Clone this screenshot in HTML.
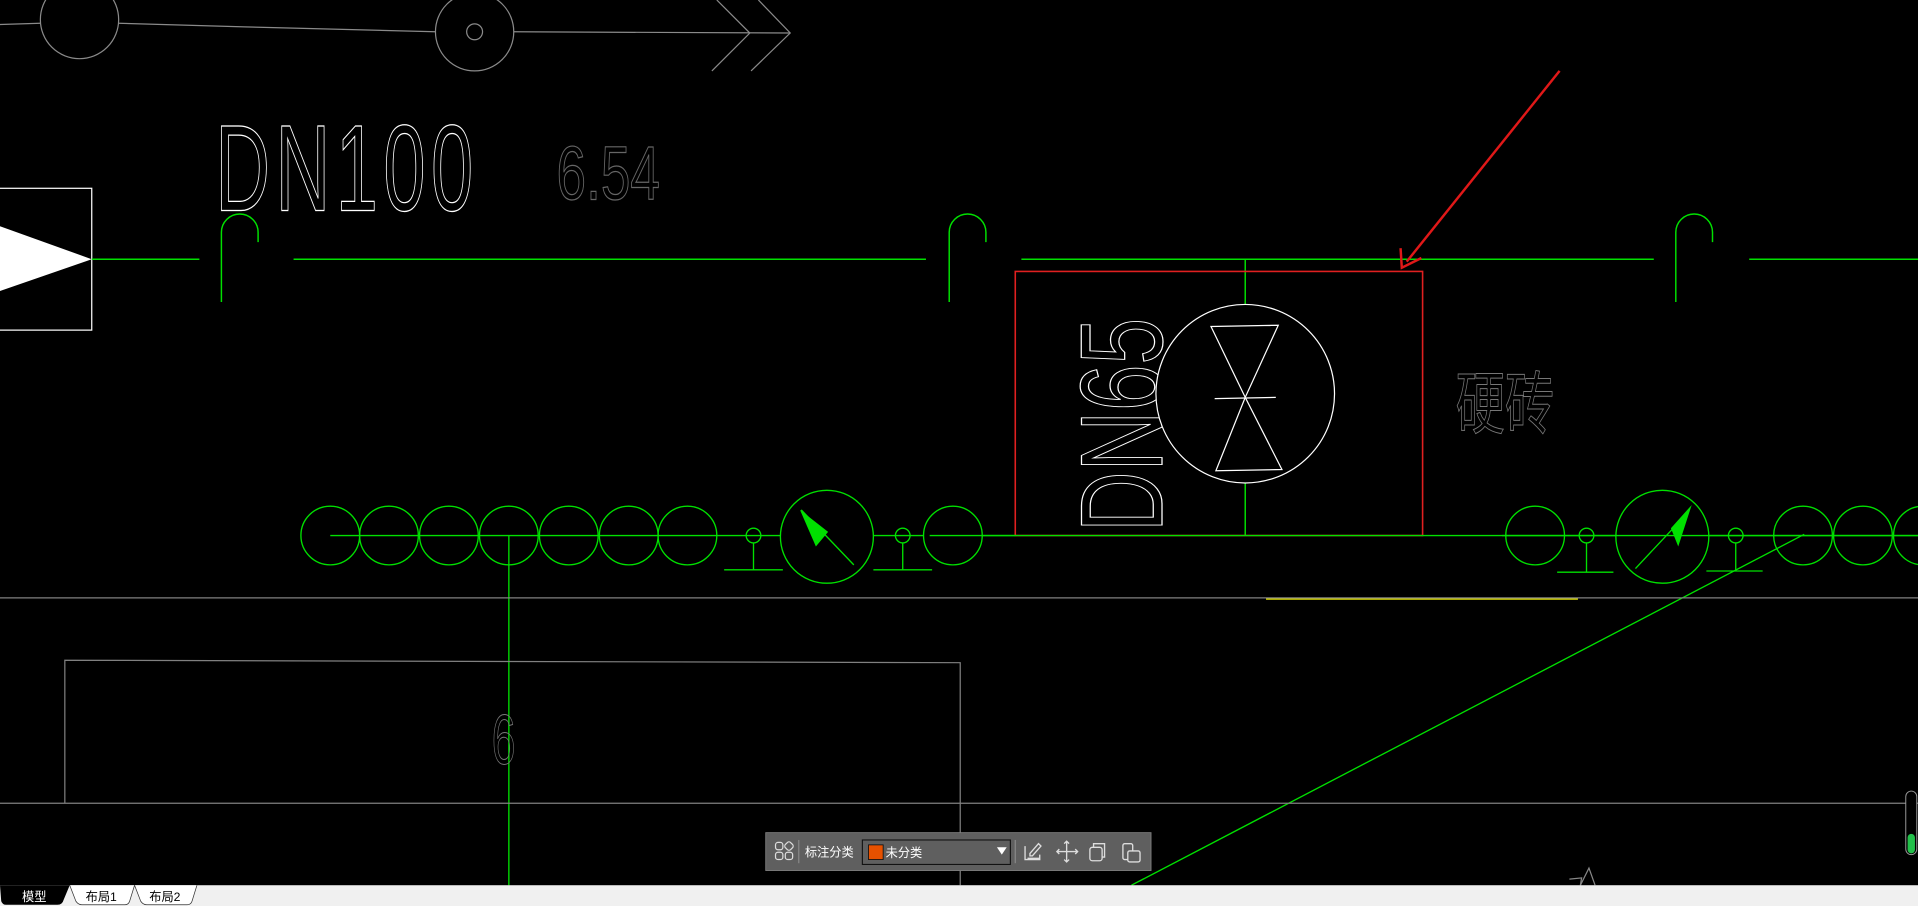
<!DOCTYPE html>
<html><head><meta charset="utf-8"><style>
html,body{margin:0;padding:0;background:#000;width:1918px;height:906px;overflow:hidden}
svg{display:block}
</style></head><body>
<svg width="1918" height="906" viewBox="0 0 1568 741" preserveAspectRatio="none" xmlns="http://www.w3.org/2000/svg" font-family="'Liberation Sans','Noto Sans CJK SC',sans-serif">
<rect width="1568" height="741" fill="#000"/>
<g stroke="#8a8a8a" fill="none" stroke-width="1">
<circle cx="65" cy="16" r="32"/>
<circle cx="388" cy="26" r="32"/><circle cx="388" cy="26" r="6.5"/>
<polyline points="0,20 33,19"/><polyline points="97,19 200,22 356,26"/><line x1="420" y1="26" x2="646" y2="27"/>
<polyline points="586,0 613,27 582,58"/><polyline points="620,0 646,27 614,58"/>
</g>
<text x="176" y="172" font-size="100" fill="none" stroke="#fff" stroke-width="1" transform="translate(176 172) scale(0.62 1) translate(-176 -172)" textLength="340">DN100</text>
<text x="455" y="163" font-size="62" fill="none" stroke="#666" stroke-width="1" transform="translate(455 163) scale(0.7 1) translate(-455 -163)">6.54</text>
<rect x="-2" y="154" width="77" height="116" fill="#000" stroke="#fff"/>
<polygon points="0,185 75,212 0,238" fill="#fff"/>
<g stroke="#00e000" fill="none" stroke-width="1.2">
<line x1="75" y1="212" x2="163" y2="212"/>
<line x1="240" y1="212" x2="757" y2="212"/>
<line x1="835" y1="212" x2="1352" y2="212"/>
<line x1="1430" y1="212" x2="1568" y2="212"/>
<path d="M181,247 V190 A15,15 0 0 1 211,190 V198"/>
<path d="M776,247 V190 A15,15 0 0 1 806,190 V198"/>
<path d="M1370,247 V190 A15,15 0 0 1 1400,190 V198"/>
<line x1="1018" y1="212" x2="1018" y2="438"/>
</g>
<rect x="830" y="222" width="333" height="216" fill="none" stroke="#e02020" stroke-width="1.3"/>
<text font-size="96" fill="none" stroke="#fff" stroke-width="1" transform="translate(950 435) rotate(-90)" textLength="175" lengthAdjust="spacingAndGlyphs">DN65</text>
<g stroke="#fff" fill="none" stroke-width="1">
<circle cx="1018" cy="322" r="73" fill="#000"/>
<polygon points="990,267 1045,266 1018,325"/>
<polygon points="994,385 1048,384 1018,325"/>
<line x1="993" y1="326" x2="1043" y2="325"/>
</g>
<text x="1190" y="350" font-size="56" fill="none" stroke="#777" stroke-width="0.8" transform="translate(1190 350) scale(0.72 1) translate(-1190 -350)">硬砖</text>
<g stroke="#00e000" fill="none" stroke-width="1.1">
<line x1="270" y1="438" x2="1568" y2="438"/>
<circle cx="270" cy="438" r="24"/><circle cx="318" cy="438" r="24"/><circle cx="367" cy="438" r="24"/><circle cx="416" cy="438" r="24"/><circle cx="465" cy="438" r="24"/><circle cx="514" cy="438" r="24"/><circle cx="562" cy="438" r="24"/>
<circle cx="616" cy="438" r="6"/><line x1="616" y1="444" x2="616" y2="466"/><line x1="592" y1="466" x2="640" y2="466"/>
<circle cx="676" cy="439" r="38" fill="#000"/>
<line x1="655" y1="417" x2="698" y2="462"/>
<circle cx="738" cy="438" r="6"/><line x1="738" y1="444" x2="738" y2="466"/><line x1="714" y1="466" x2="762" y2="466"/>
<circle cx="779" cy="438" r="24" fill="#000"/>
<line x1="760" y1="438" x2="830" y2="438"/>
<circle cx="1255" cy="438" r="24"/>
<circle cx="1297" cy="438" r="6"/><line x1="1297" y1="444" x2="1297" y2="468"/><line x1="1273" y1="468" x2="1319" y2="468"/>
<circle cx="1359" cy="439" r="38" fill="#000"/>
<line x1="1337" y1="465" x2="1367" y2="433"/>
<circle cx="1419" cy="438" r="6"/><line x1="1419" y1="444" x2="1419" y2="467"/><line x1="1395" y1="467" x2="1441" y2="467"/>
<circle cx="1474" cy="438" r="24"/><circle cx="1523" cy="438" r="24"/><circle cx="1572" cy="438" r="24"/>
<line x1="1228" y1="438" x2="1568" y2="438"/>
<line x1="416" y1="438" x2="416" y2="724"/>
<line x1="925" y1="724" x2="1475" y2="437"/>
</g>
<polygon points="654,417 677,435 667,447" fill="#00e000"/>
<polygon points="1383,413 1366,432 1372,447" fill="#00e000"/>
<g stroke="#808080" fill="none" stroke-width="1">
<line x1="0" y1="489" x2="1568" y2="489"/>
<polyline points="53,657 53,540 785,542 785,724"/>
<line x1="0" y1="657" x2="1568" y2="657"/>
</g>
<line x1="1035" y1="490" x2="1290" y2="490" stroke="#e0e000" stroke-width="1"/>
<text x="402" y="625" font-size="58" fill="none" stroke="#777" stroke-width="0.8" transform="translate(402 625) scale(0.6 1) translate(-402 -625)">6</text>
<g stroke="#888" fill="none" stroke-width="1"><polyline points="1283,719 1293,718 1292,724"/><polyline points="1292,724 1299,710 1304,724"/></g>
<line x1="1275" y1="58" x2="1150" y2="214" stroke="#e01818" stroke-width="2"/>
<polyline points="1145,203 1146,219 1162,211" fill="none" stroke="#e01818" stroke-width="2"/>
<rect x="1558" y="647" width="9" height="52" rx="4.5" fill="#000" stroke="#999" stroke-width="0.8"/>
<rect x="1559.5" y="682" width="6" height="16" rx="3" fill="#22c04a"/>
<rect x="626" y="681" width="315" height="31" fill="#5f5f5f" stroke="#808080" stroke-width="0.7"/>
<g fill="none" stroke="#ddd" stroke-width="1">
<rect x="634" y="689" width="6" height="6" rx="2"/><rect x="642" y="689" width="6" height="6" rx="2" transform="rotate(45 645 692)"/><rect x="634" y="697" width="6" height="6" rx="2"/><rect x="642" y="697" width="6" height="6" rx="2"/>
</g>
<line x1="653" y1="687" x2="653" y2="706" stroke="#888"/>
<text x="658" y="700.5" font-size="10" fill="#fff">标注分类</text>
<rect x="705" y="687" width="121" height="20" fill="#5f5f5f" stroke="#111" stroke-width="0.9"/>
<rect x="710" y="691" width="12" height="12" fill="#e65100" stroke="#111" stroke-width="0.7"/>
<text x="724" y="701" font-size="10" fill="#fff">未分类</text>
<polygon points="815,693 823,693 819,699" fill="#fff"/>
<line x1="830" y1="687" x2="830" y2="706" stroke="#888"/>
<g fill="none" stroke="#ddd" stroke-width="1.1">
<path d="M838,692 v11 h12 v-4 M840,702 h10 M842,698 l7,-8 2,2 -7,8 h-2z"/>
<path d="M872,688 v17 M864,696.5 h17 M870,690 l2,-2 2,2 M870,703 l2,2 2,-2 M866,694.5 l-2,2 2,2 M879,694.5 l2,2 -2,2"/>
<rect x="891" y="693" width="10" height="11" rx="2"/><path d="M894,693 v-3 h9 v11 h-2"/>
<rect x="918" y="690" width="8" height="13" rx="1.5"/><rect x="922" y="696" width="10" height="9" rx="1.5" fill="#5f5f5f"/>
</g>
<rect x="0" y="724" width="1568" height="17" fill="#f0f0f0"/>
<path d="M0,724 H57 L52,736 Q51,740 47,740 H5 Q2,740 1,737 Z" fill="#000"/>
<path d="M57,724 L62,737 Q64,740 67,740 H102 Q105,740 106,737 L110,724" fill="#fff" stroke="#333" stroke-width="0.6"/>
<path d="M110,724 L115,737 Q117,740 120,740 H153 Q156,740 157,737 L161,724" fill="#fff" stroke="#333" stroke-width="0.6"/>
<text x="18" y="737" font-size="10" fill="#fff">模型</text>
<text x="70" y="737" font-size="10" fill="#000">布局1</text>
<text x="122" y="737" font-size="10" fill="#000">布局2</text>
</svg>
</body></html>
